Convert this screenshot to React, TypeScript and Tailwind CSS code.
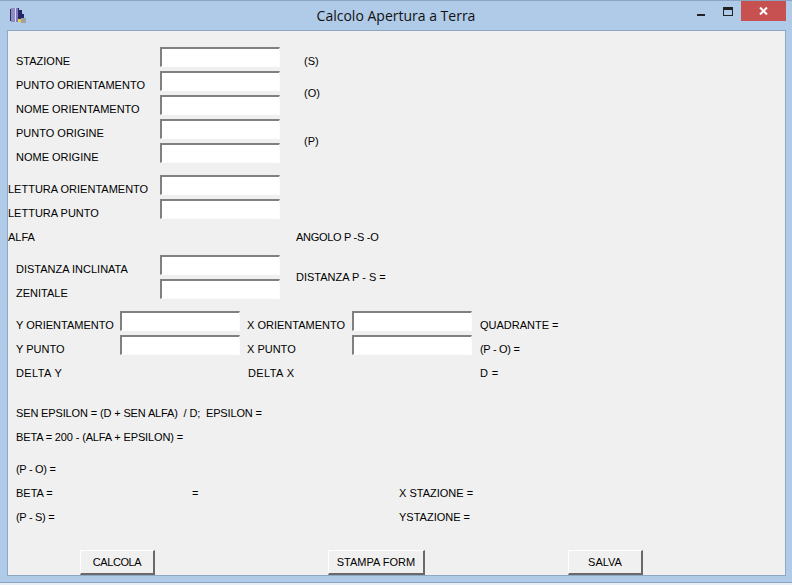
import React from 'react';

const Field: React.FC = () => (
  <div className="h-[20px] w-[120px] shrink-0 -mt-px bg-white border-t-2 border-l-2 border-r border-b border-t-[#808080] border-l-[#808080] border-r-[#fcfcfc] border-b-[#fcfcfc]" />
);

const Row: React.FC<{ label: string; indent?: boolean }> = ({ label, indent = true }) => (
  <div className="flex h-[24px] items-start">
    <span className={indent ? 'w-[152px] pl-2 pt-[6px]' : 'w-[152px] pt-[6px]'}>{label}</span>
    <Field />
  </div>
);

const Line: React.FC<{ children: React.ReactNode; className?: string }> = ({ children, className = '' }) => (
  <div className={`flex h-[24px] pt-[6px] ${className}`}>{children}</div>
);

const FormButton: React.FC<{ label: string; className: string }> = ({ label, className }) => (
  <button
    type="button"
    className={`h-[25px] bg-[#f0f0f0] border-t border-l border-r-2 border-b-2 border-t-white border-l-white border-r-[#696969] border-b-[#696969] text-black ${className}`}
  >
    {label}
  </button>
);

const AppIcon = () => (
  <svg width="17" height="17" viewBox="0 0 17 17" className="shrink-0">
    <rect x="0" y="2" width="1" height="12" fill="#30304c" />
    <rect x="1" y="1" width="4" height="14" fill="#8c8ccc" />
    <rect x="5" y="1" width="1" height="14" fill="#d8d8e8" />
    <rect x="6" y="1" width="2" height="14" fill="#7c7cc0" />
    <rect x="8" y="1" width="1" height="14" fill="#30304c" />
    <rect x="9" y="3" width="3" height="10" fill="#24246c" />
    <rect x="12" y="7" width="2" height="5" fill="#24246c" />
    <rect x="8" y="12" width="3" height="3" fill="#e8c84c" />
    <rect x="11" y="11" width="5" height="5" fill="#a0a0a0" />
  </svg>
);

export default function App() {
  return (
    <div className="h-[585px] w-[792px] bg-[#e8eef5] overflow-hidden">
      <div className="h-[583px] bg-[#afcbe8] border-t border-b border-[#8aa4c2] px-px flex flex-col">
        <div className="relative flex h-[29px] shrink-0 items-center pl-[9px]">
          <AppIcon />
          <span className="absolute left-0 right-0 top-[6px] text-center text-[14px] leading-[18px] text-[#111] font-['Open_Sans',sans-serif]">
            Calcolo Apertura a Terra
          </span>
          <div className="absolute left-[696px] top-[13px] h-[2px] w-[8px] bg-[#222]" />
          <div className="absolute left-[722px] top-[6px] h-[9px] w-[10px] border border-t-[3px] border-[#222]" />
          <div className="absolute left-[740px] top-0 flex h-[20px] w-[45px] items-center justify-center bg-[#c75050]">
            <svg width="9" height="8" viewBox="0 0 9 8">
              <path d="M1 0.5 L8 7.5 M8 0.5 L1 7.5" stroke="#fff" strokeWidth="2" />
            </svg>
          </div>
        </div>
        <div className="ml-[6px] mr-[5px] h-[546px] bg-[#f0f0f0] border border-[#8fa7c2] pt-[17px] whitespace-nowrap text-[11px] leading-[14px] text-black font-['Liberation_Sans',sans-serif]">
          <div className="flex">
            <div>
              <Row label="STAZIONE" />
              <Row label="PUNTO ORIENTAMENTO" />
              <Row label="NOME ORIENTAMENTO" />
              <Row label="PUNTO ORIGINE" />
              <Row label="NOME ORIGINE" />
            </div>
            <div className="ml-[24px] flex flex-col">
              <Line>(S)</Line>
              <Line className="mt-[8px]">(O)</Line>
              <Line className="mt-[24px]">(P)</Line>
            </div>
          </div>
          <div className="mt-[8px]">
            <Row label="LETTURA ORIENTAMENTO" indent={false} />
            <Row label="LETTURA PUNTO" indent={false} />
          </div>
          <Line>
            <span className="w-[288px]">ALFA</span>
            <span className="tracking-[-0.3px]">ANGOLO P -S -O</span>
          </Line>
          <div className="mt-[8px] flex">
            <div>
              <Row label="DISTANZA INCLINATA" />
              <Row label="ZENITALE" />
            </div>
            <Line className="ml-[16px] mt-[8px]">DISTANZA P - S =</Line>
          </div>
          <div className="mt-[8px]">
            <div className="flex h-[24px] items-start">
              <span className="w-[112px] pl-2 pt-[6px]">Y ORIENTAMENTO</span>
              <Field />
              <span className="w-[112px] pl-[7px] pt-[6px]">X ORIENTAMENTO</span>
              <Field />
              <span className="pl-2 pt-[6px]">QUADRANTE =</span>
            </div>
            <div className="flex h-[24px] items-start">
              <span className="w-[112px] pl-2 pt-[6px]">Y PUNTO</span>
              <Field />
              <span className="w-[112px] pl-[7px] pt-[6px]">X PUNTO</span>
              <Field />
              <span className="pl-2 pt-[6px] tracking-[-0.3px]">(P - O) =</span>
            </div>
            <Line className="tracking-[0.4px]">
              <span className="w-[240px] pl-2">DELTA Y</span>
              <span className="w-[232px]">DELTA X</span>
              <span>D =</span>
            </Line>
          </div>
          <div className="mt-[16px] tracking-[-0.14px]">
            <Line className="pl-2">SEN EPSILON = (D + SEN ALFA)&nbsp; / D;&nbsp; EPSILON =</Line>
            <Line className="pl-2">BETA = 200 - (ALFA + EPSILON) =</Line>
          </div>
          <div className="mt-[8px] pl-2">
            <Line className="tracking-[-0.3px]">(P - O) =</Line>
            <Line>
              <span className="w-[176px]">BETA =</span>
              <span className="w-[207px]">=</span>
              <span>X STAZIONE =</span>
            </Line>
            <Line>
              <span className="w-[383px] tracking-[-0.3px]">(P - S) =</span>
              <span>YSTAZIONE =</span>
            </Line>
          </div>
          <div className="mt-[22px] flex">
            <FormButton label="CALCOLA" className="ml-[72px] w-[75px] tracking-[-0.4px]" />
            <FormButton label="STAMPA FORM" className="ml-[173px] w-[97px]" />
            <FormButton label="SALVA" className="ml-[143px] w-[75px]" />
          </div>
        </div>
      </div>
    </div>
  );
}
